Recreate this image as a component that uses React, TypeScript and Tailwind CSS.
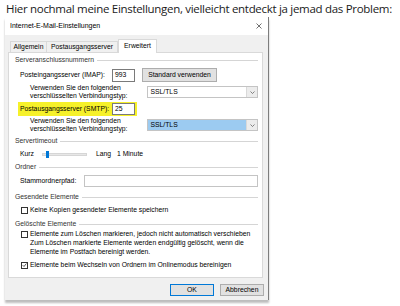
import React from "react";

const ui = { fontFamily: '"Liberation Sans", Arial, sans-serif' };

function Group({ title, className = "" }: { title: string; className?: string }) {
  return (
    <div className={`flex h-[10px] items-center gap-[3px] ${className}`}>
      <span className="whitespace-nowrap text-[#333]">{title}</span>
      <div className="h-px flex-1 bg-[#d5d5d5]" />
    </div>
  );
}

function Check({ checked = false, label, className = "" }: { checked?: boolean; label: string; className?: string }) {
  return (
    <div className={`ml-[6px] flex h-[10px] items-center gap-[2px] ${className}`}>
      <span className="flex h-[7px] w-[7px] items-center justify-center border border-[#333] bg-white">
        {checked && (
          <svg width="6" height="6" viewBox="0 0 6 6">
            <path d="M0.8 3.2 L2.4 4.8 L5.3 1.2" fill="none" stroke="#222" strokeWidth="0.9" />
          </svg>
        )}
      </span>
      <span className="whitespace-nowrap">{label}</span>
    </div>
  );
}

function Select({ blue = false }: { blue?: boolean }) {
  return (
    <div className="flex h-[12px] w-[111px] items-stretch border border-[#c4c4c4] bg-white">
      <div className={`flex flex-1 items-center pl-[2px] ${blue ? "bg-[#9ccbf1]" : ""}`}>SSL/TLS</div>
      <div className="flex w-[11px] items-center justify-center border-l border-[#d9d9d9] bg-[#ececec]">
        <svg width="5" height="3" viewBox="0 0 5 3">
          <path d="M0.5 0.5 L2.5 2.5 L4.5 0.5" fill="none" stroke="#555" strokeWidth="0.7" />
        </svg>
      </div>
    </div>
  );
}

function TwoLines() {
  return (
    <div className="ml-[15px] w-[118px] leading-[8px]">
      <div className="whitespace-nowrap">Verwenden Sie den folgenden</div>
      <div className="whitespace-nowrap">verschlüsselten Verbindungstyp:</div>
    </div>
  );
}

export default function App() {
  return (
    <div className="h-[306px] w-[400px] overflow-hidden bg-white text-[#1a1a1a]">
      {/* Forum-Text */}
      <p
        className="flex h-[17px] items-center whitespace-nowrap pl-[6px] text-[11.5px]"
        style={{ fontFamily: '"Open Sans", sans-serif', letterSpacing: "-0.3px" }}
      >
        Hier nochmal meine Einstellungen, vielleicht entdeckt ja jemad das Problem:
      </p>

      {/* Dialog */}
      <div
        className="ml-[5px] flex h-[283px] w-[264px] flex-col border-r border-[#7d7d7d] bg-[#f0f0f0] text-[6.8px] text-black shadow-[0_3px_2px_#bdbdbd]"
        style={ui}
      >
        <div className="flex h-[18px] items-center justify-between bg-white pl-[5px] pr-[6px] text-[7px]">
          <span>Internet-E-Mail-Einstellungen</span>
          <svg width="6" height="6" viewBox="0 0 6 6">
            <path d="M0.5 0.5 L5.5 5.5 M5.5 0.5 L0.5 5.5" stroke="#333" strokeWidth="0.7" />
          </svg>
        </div>

        {/* Tabs */}
        <div className="flex h-[17px] items-end pl-[5px]">
          <div className="flex h-[11px] w-[37px] items-center justify-center border border-b-0 border-[#d9d9d9] bg-[#f0f0f0]">
            Allgemein
          </div>
          <div className="flex h-[11px] w-[71px] items-center justify-center border border-b-0 border-l-0 border-[#d9d9d9] bg-[#f0f0f0]">
            Postausgangsserver
          </div>
          <div className="relative top-px flex h-[14px] w-[39px] items-center justify-center border border-b-0 border-[#d9d9d9] bg-white">
            Erweitert
          </div>
        </div>

        {/* Panel */}
        <div className="ml-[3px] flex h-[226px] w-[255px] flex-col border border-[#d9d9d9] bg-white pl-[6px] pr-[4px]">
          <Group title="Serveranschlussnummern" className="mt-[2px]" />

          <div className="mt-[3px] flex h-[14px] items-center">
            <span className="ml-[5px] w-[92px] whitespace-nowrap">Posteingangsserver (IMAP):</span>
            <span className="flex h-[13px] w-[23px] items-center border border-[#7a7a7a] pl-[2px]">993</span>
            <span className="ml-[7px] flex h-[14px] w-[75px] items-center justify-center border border-[#adadad] bg-[#e1e1e1]">
              Standard verwenden
            </span>
          </div>

          <div className="mt-[2px] flex h-[16px] items-center">
            <TwoLines />
            <Select />
          </div>

          <div className="mt-[2px] flex h-[14px] items-center">
            <div className="ml-[3px] flex h-[14px] w-[119px] items-center bg-[#f6f12a] pl-[2px]">
              <span className="w-[92px] whitespace-nowrap">Postausgangsserver (SMTP):</span>
              <span className="flex h-[12px] w-[23px] items-center border border-[#7a7a7a] bg-white pl-[2px]">25</span>
            </div>
          </div>

          <div className="mt-[1px] flex h-[16px] items-center">
            <TwoLines />
            <Select blue />
          </div>

          <Group title="Servertimeout" className="mt-[3px]" />

          <div className="mt-[3px] flex h-[10px] items-center">
            <span className="ml-[5px] w-[22px]">Kurz</span>
            <div className="relative h-[3px] w-[45px] border border-[#d6d6d6] bg-[#e7e7e7]">
              <div className="absolute left-[3px] top-[-3px] h-[7px] w-[3px] bg-[#0078d7]" />
            </div>
            <span className="ml-[9px] w-[21px]">Lang</span>
            <span>1 Minute</span>
          </div>

          <Group title="Ordner" className="mt-[3px]" />

          <div className="mt-[3px] flex h-[12px] items-center">
            <span className="ml-[5px] w-[64px] whitespace-nowrap">Stammordnerpfad:</span>
            <span className="h-[12px] flex-1 border border-[#c4c4c4] bg-white" />
          </div>

          <Group title="Gesendete Elemente" className="mt-[5px]" />
          <Check label="Keine Kopien gesendeter Elemente speichern" className="mt-[3px]" />

          <Group title="Gelöschte Elemente" className="mt-[4px]" />
          <Check label="Elemente zum Löschen markieren, jedoch nicht automatisch verschieben" />
          <div className="ml-[15px] leading-[8.5px]">
            <div className="whitespace-nowrap">Zum Löschen markierte Elemente werden endgültig gelöscht, wenn die</div>
            <div className="whitespace-nowrap">Elemente im Postfach bereinigt werden.</div>
          </div>
          <Check checked label="Elemente beim Wechseln von Ordnern im Onlinemodus bereinigen" className="mt-[4px]" />
        </div>

        {/* Buttons */}
        <div className="mt-[6px] flex gap-[6px] pl-[165px]">
          <span className="flex h-[12px] w-[44px] items-center justify-center border border-[#0078d7] bg-[#e1e1e1]">OK</span>
          <span className="flex h-[12px] w-[44px] items-center justify-center border border-[#adadad] bg-[#e1e1e1]">
            Abbrechen
          </span>
        </div>
      </div>
    </div>
  );
}
